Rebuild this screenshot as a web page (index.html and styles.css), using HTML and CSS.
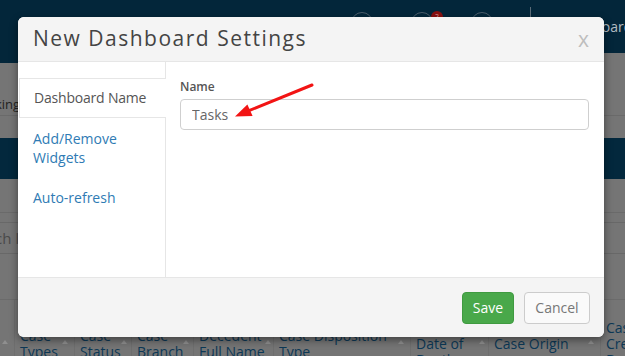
FILE: index.html
```html
<!DOCTYPE html>
<html lang="en">
<head>
<meta charset="utf-8">
<title>New Dashboard Settings</title>
<link rel="stylesheet" href="styles.css">
</head>
<body>
<div class="page">
  <header class="topbar">
    <div class="brand"></div>
    <div class="tools">
      <span class="ring"></span>
      <span class="ring"><span class="badge">2</span></span>
      <span class="ring"></span>
      <span class="vsep"></span>
      <span class="user">Dashboard</span>
    </div>
  </header>
  <div class="subbar">
    <div class="crumb-row"><span class="crumb">Tracking</span></div>
  </div>
  <div class="band"></div>
  <div class="filters">
    <div class="filter-row"></div>
    <div class="search"><span class="placeholder">Search list</span></div>
  </div>
  <div class="grid">
    <div class="th first"><span class="sort"></span></div>
    <div class="th"><span>Case<br>Types</span><span class="sort"></span></div>
    <div class="th"><span>Case<br>Status</span><span class="sort"></span></div>
    <div class="th"><span>Case<br>Branch</span><span class="sort"></span></div>
    <div class="th"><span>Decedent<br>Full Name</span><span class="sort"></span></div>
    <div class="th"><span>Case Disposition<br>Type</span><span class="sort"></span></div>
    <div class="th"><span>Decedent<br>Date of<br>Death</span><span class="sort"></span></div>
    <div class="th"><span>Case Origin</span><span class="sort"></span></div>
    <div class="th"><span>Case<br>Created<br>Date</span></div>
  </div>
</div>

<div class="modal">
  <div class="mhead">
    <h1 class="mtitle">New Dashboard Settings</h1>
    <span class="mclose">x</span>
  </div>
  <div class="mbody">
    <nav class="mnav">
      <div class="tab active">Dashboard Name</div>
      <a class="tab">Add/Remove Widgets</a>
      <a class="tab">Auto-refresh</a>
    </nav>
    <div class="mcontent">
      <label class="flabel" for="dname">Name</label>
      <input class="finput" id="dname" type="text" value="Tasks">
      <svg class="arrow" viewBox="0 0 437 215" width="437" height="215">
        <line x1="146" y1="23" x2="83" y2="48.6" stroke="#f21414" stroke-width="3" stroke-linecap="round"/>
        <polygon points="69,54.5 86.6,54 81.4,42.6" fill="#f21414"/>
      </svg>
    </div>
  </div>
  <div class="mfoot">
    <button class="btn btn-save">Save</button>
    <button class="btn btn-cancel">Cancel</button>
  </div>
</div>
</body>
</html>
```

FILE: styles.css
```css
html, body {
  margin: 0;
  padding: 0;
}
body {
  width: 625px;
  height: 356px;
  overflow: hidden;
  background: #757575;
  font-family: "Open Sans", "Liberation Sans", sans-serif;
  position: relative;
}

/* ---- dimmed page behind the dialog ---- */
.page {
  width: 625px;
}
.topbar {
  height: 53px;
  background: #03263a;
  display: flex;
  align-items: flex-start;
}
.brand {
  flex: none;
  width: 160px;
  height: 63px;
  background: #03263a;
}
.tools {
  display: flex;
  align-items: flex-start;
  margin-left: 191px;
}
.ring {
  position: relative;
  flex: none;
  width: 22px;
  height: 22px;
  box-sizing: border-box;
  border: 1.5px solid #4a5d6b;
  border-radius: 50%;
  margin-top: 12px;
  margin-right: 38px;
}
.ring:nth-child(3) {
  margin-right: 37px;
}
.badge {
  position: absolute;
  left: 19px;
  top: -2px;
  width: 12px;
  height: 12px;
  border-radius: 50%;
  background: #8a1111;
  color: #d9a0a0;
  font-size: 7px;
  line-height: 12px;
  text-align: center;
}
.vsep {
  flex: none;
  width: 1px;
  height: 34px;
  margin-top: 7px;
  background: #5b6c78;
}
.user {
  margin-left: 29px;
  margin-top: 17px;
  color: #b3bcc2;
  font-size: 14px;
  white-space: nowrap;
}

.subbar {
  height: 85px;
  box-sizing: border-box;
  padding-top: 39px;
}
.crumb-row {
  height: 23px;
  border-bottom: 1px solid #6a6a6a;
}
.crumb {
  display: inline-block;
  margin-left: -31px;
  color: #222;
  font-size: 13px;
  line-height: 20px;
}
.band {
  height: 41px;
  background: #03283d;
}
.filters {
  height: 121px;
  box-sizing: border-box;
  border-bottom: 1px solid #6b6b6b;
}
.filter-row {
  height: 33px;
  border-bottom: 1px solid #6a6a6a;
}
.search {
  margin-top: 9px;
  height: 32px;
  box-sizing: border-box;
  border-top: 1px solid #686868;
  border-bottom: 1px solid #686868;
  display: flex;
  align-items: center;
}
.placeholder {
  margin-left: -36px;
  color: #4a4a4a;
  font-size: 15px;
  white-space: nowrap;
}
.grid {
  display: grid;
  grid-template-columns: 14px 60px 57px 62px 80px 137px 78px 112px 60px;
  height: 88px;
}
.th {
  display: flex;
  align-items: center;
  justify-content: space-between;
  padding: 0 6px 0 5px;
  border-left: 1px solid #6e6e6e;
  color: #0c3856;
  font-size: 14px;
  line-height: 16px;
  white-space: nowrap;
}
.th.first {
  border-left: 0;
  padding: 0 6px 0 0;
  justify-content: flex-end;
}
.sort {
  flex: none;
  width: 0;
  height: 0;
  border-left: 3.5px solid transparent;
  border-right: 3.5px solid transparent;
  border-bottom: 4px solid #8f8f8f;
  margin-top: -5px;
}

/* ---- dialog ---- */
.modal {
  position: absolute;
  left: 18px;
  top: 17px;
  width: 586px;
  height: 320px;
  background: #fff;
  border-radius: 6px;
  box-shadow: 0 3px 9px rgba(0, 0, 0, 0.45);
  display: flex;
  flex-direction: column;
  overflow: hidden;
}
.mhead {
  flex: none;
  height: 45px;
  box-sizing: border-box;
  border-bottom: 1px solid #e6e6e6;
  background: #f4f4f4;
  display: flex;
  align-items: center;
  justify-content: space-between;
  padding: 0 15px 2px 15px;
}
.mtitle {
  margin: 0;
  font-size: 21px;
  font-weight: 400;
  color: #444;
  letter-spacing: 1.5px;
}
.mclose {
  color: #bdbdbd;
  font-size: 21px;
  line-height: 20px;
  margin-top: 2px;
}
.mbody {
  flex: 1;
  display: flex;
}
.mnav {
  flex: none;
  width: 148px;
  box-sizing: border-box;
  border-right: 1px solid #e6e6e6;
  padding-top: 16px;
  display: flex;
  flex-direction: column;
}
.tab {
  display: block;
  padding: 10.5px 15px;
  font-size: 14px;
  line-height: 19px;
  color: #2f7bb4;
}
.tab.active {
  margin-left: 1px;
  margin-right: -1px;
  padding: 9px 15px 10px 14px;
  border: 1px solid #e6e6e6;
  border-right: 0;
  background: #fff;
  color: #555;
  letter-spacing: -0.2px;
}
.mcontent {
  position: relative;
  flex: 1;
  padding: 16px 15px 0 14px;
}
.flabel {
  display: block;
  font-size: 12px;
  font-weight: 600;
  line-height: 17px;
  color: #555;
  margin-bottom: 4px;
}
.finput {
  display: block;
  width: 100%;
  height: 31px;
  box-sizing: border-box;
  border: 1px solid #cfcfcf;
  border-radius: 4px;
  padding: 0 11px;
  font-family: "Open Sans", "Liberation Sans", sans-serif;
  font-size: 14px;
  color: #666;
  background: #fff;
  outline: none;
}
.arrow {
  position: absolute;
  left: 0;
  top: 0;
  pointer-events: none;
  overflow: visible;
}
.mfoot {
  flex: none;
  height: 60px;
  box-sizing: border-box;
  border-top: 1px solid #e6e6e6;
  background: #f4f4f4;
  display: flex;
  justify-content: flex-end;
  align-items: center;
  gap: 10px;
  padding-right: 14px;
}
.btn {
  height: 32px;
  box-sizing: border-box;
  border-radius: 4px;
  font-family: "Open Sans", "Liberation Sans", sans-serif;
  font-size: 14px;
  padding: 0;
}
.btn-save {
  width: 52px;
  background: #49a84a;
  border: 1px solid #3f9a40;
  color: #fff;
}
.btn-cancel {
  width: 66px;
  background: #fafafa;
  border: 1px solid #cccccc;
  color: #777;
}
```
